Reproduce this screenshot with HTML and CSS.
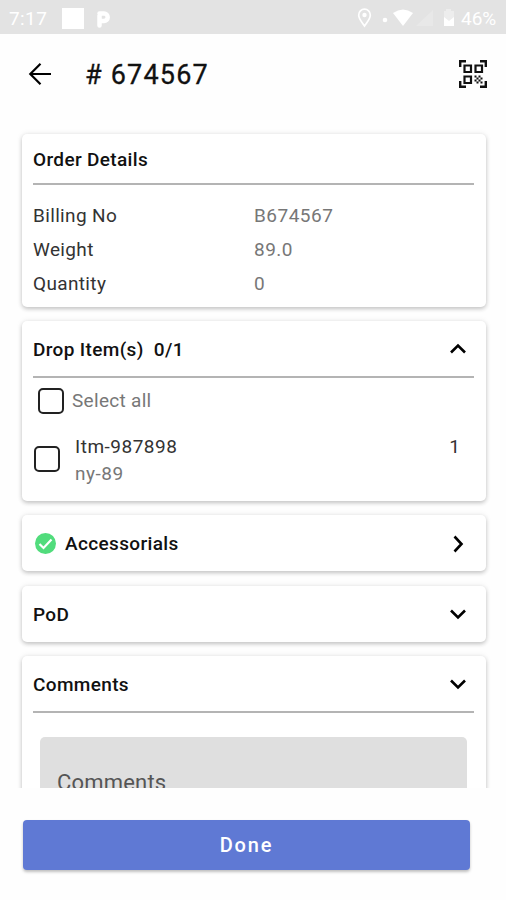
FILE: index.html
```html
<!DOCTYPE html>
<html lang="en">
<head>
<meta charset="utf-8">
<title># 674567</title>
<link rel="stylesheet" href="styles.css">
</head>
<body>
<div class="status">
  <span class="time">7:17</span>
  <span class="note"></span>
  <svg class="parking" width="16" height="19" viewBox="0 0 16 19"><path d="M3.500 16.500V6.500M3.500 4.500H8a3.700 3.700 0 0 1 0 7.400H6" fill="none" stroke="#fff" stroke-width="4.500" stroke-linecap="round" stroke-linejoin="round"/></svg>
  <svg class="indicators" width="100" height="24" viewBox="0 0 100 24">
    <path d="M8.500 20C6 16 2.700 13 2.700 9a5.800 5.800 0 0 1 11.600 0c0 4-3.300 7-5.800 11z" fill="none" stroke="#fff" stroke-width="1.700"/>
    <circle cx="8.500" cy="9" r="2.200" fill="#fff"/>
    <circle cx="29" cy="14" r="2.300" fill="#fff"/>
    <path d="M37 7q10-7 20 0L47 20z" fill="#fff"/>
    <path d="M60 20L77 4v16z" fill="#e8e8e8"/>
    <path d="M90 5V3h5v2h3v15H88V5z" fill="#ededed"/>
    <path d="M88 11l5 4 5-4v9H88z" fill="#fff"/>
  </svg>
  <span class="battery">46%</span>
</div>
<header class="bar">
  <svg class="back" width="24" height="24" viewBox="0 0 24 24" fill="none" stroke="#000" stroke-width="2.200"><path d="M23 12H2.500M12.500 1.800L2.300 12l10.200 10.200"/></svg>
  <h1 class="title"># 674567</h1>
  <svg class="scan" width="28" height="28" viewBox="0 0 28 28" fill="none" stroke="#111" stroke-width="2.200">
    <path d="M1.200 7V1.200H7M21 1.200h5.800V7M26.800 21v5.800H21M7 26.800H1.200V21" stroke-width="2.400"/>
    <path d="M5.500 5.500h6.500v6.500H5.500zM16.500 5.500H23v6.500h-6.500zM5.500 16.500h6.500V23H5.500z"/>
    <path d="M15.500 16.500h2m2 0h2M17.500 18.500h2m2 0h2M15.500 20.500h2m2 0h2M17.500 22.500h2m2 0h2" stroke-width="1.900"/>
  </svg>
</header>
<main class="content">
  <section class="card order">
    <h2 class="head">Order Details</h2>
    <dl class="facts">
      <dt>Billing No</dt><dd>B674567</dd>
      <dt>Weight</dt><dd>89.0</dd>
      <dt>Quantity</dt><dd>0</dd>
    </dl>
  </section>
  <section class="card drop">
    <h2 class="head"><span class="label">Drop Item(s)&nbsp; 0/1</span>
      <svg class="chev" width="24" height="24" viewBox="0 0 24 24"><path d="M5 15.500L12 8.500l7 7"/></svg></h2>
    <div class="select"><span class="box"></span><span class="all">Select all</span></div>
    <div class="item">
      <span class="box"></span>
      <div class="text"><div class="name">Itm-987898</div><div class="place">ny-89</div></div>
      <span class="qty">1</span>
    </div>
  </section>
  <section class="card closed">
    <h2 class="head">
      <svg class="check" width="21" height="21" viewBox="0 0 21 21"><circle cx="10.500" cy="10.500" r="10.500" fill="#51dc7c"/><path d="M4.500 11l4 4 8-8.500" fill="none" stroke="#fff" stroke-width="2.200"/></svg>
      <span class="label">Accessorials</span>
      <svg class="chev" width="24" height="24" viewBox="0 0 24 24"><path d="M8.500 4.500l7 7.500-7 7.500"/></svg></h2>
  </section>
  <section class="card closed">
    <h2 class="head"><span class="label">PoD</span>
      <svg class="chev" width="24" height="24" viewBox="0 0 24 24"><path d="M5 8.500l7 7 7-7"/></svg></h2>
  </section>
  <section class="card comments">
    <h2 class="head"><span class="label">Comments</span>
      <svg class="chev" width="24" height="24" viewBox="0 0 24 24"><path d="M5 8.500l7 7 7-7"/></svg></h2>
    <div class="field"><span class="hint">Comments</span></div>
  </section>
</main>
<footer class="foot"><button class="done">Done</button></footer>
</body>
</html>
```
FILE: styles.css
```css
* { box-sizing: border-box; margin: 0; padding: 0; }
body {
  width: 506px; height: 900px; overflow: hidden;
  display: flex; flex-direction: column;
  background: #fefefe; color: #111;
  font-family: Roboto, "Liberation Sans", sans-serif;
  font-size: 19px;
}
svg { display: block; flex: none; }
.status {
  height: 34px; flex: none; display: flex; align-items: center;
  padding: 2px 8px 0 9px; background: #e3e3e3; color: #fff;
}
.time { width: 53px; font-size: 19px; letter-spacing: 0.4px; }
.note { width: 22px; height: 21px; background: #fff; margin-right: 12px; }
.indicators { margin-left: auto; margin-right: 5px; }
.battery { font-size: 19px; width: 37px; white-space: nowrap; }
.bar {
  height: 88px; flex: none; display: flex; align-items: flex-start;
  padding: 25px 19px 0 28px;
}
.back { margin-top: 3px; }
.scan { margin-top: 1px; }
.title { margin: 0 auto 0 33px; font-size: 27px; line-height: 32px; font-weight: 400; letter-spacing: 1.2px; -webkit-text-stroke: 0.3px #111; }
.content { height: 666px; flex: none; overflow: hidden; padding: 12px 20px 0 22px; }
.card {
  border-radius: 5px; background: #fff; padding: 0 12px; margin-bottom: 14px;
  box-shadow: 0 2px 4px rgba(0,0,0,.2), 0 0 6px rgba(0,0,0,.08);
}
.order { height: 173px; }
.drop { height: 180px; }
.closed { height: 56px; margin-bottom: 14.500px; }
.comments { height: 220px; }
.head {
  height: 57px; display: flex; align-items: center; padding-top: 1px;
  border-bottom: 2px solid #b4b4b4; margin-left: -1px;
  font-size: 19px; font-weight: 500; letter-spacing: 0.35px;
}
.order .head { height: 51px; }
.closed .head { height: 56px; border: 0; }
.chev { margin: 0 4.500px 0 auto; fill: none; stroke: #000; stroke-width: 2.600; }
.check { margin: 0 9px 0 2px; }
.facts {
  display: grid; grid-template-columns: 221px 1fr; grid-auto-rows: 34px;
  padding-top: 14px; margin-left: -1px; line-height: 34px; letter-spacing: 0.35px;
}
.facts dt { color: #333; }
.facts dd { color: #777; letter-spacing: 0.5px; }
.box { width: 26px; height: 26px; flex: none; border: 2px solid #222; border-radius: 5px; }
.select { height: 45px; display: flex; align-items: center; padding-left: 4px; gap: 8px; }
.all { color: #777; letter-spacing: 0.3px; }
.item { display: flex; align-items: flex-start; height: 70px; padding-top: 10px; }
.item .box { margin-top: 13px; }
.text { margin-left: 15px; line-height: 27px; letter-spacing: 0.5px; }
.name { color: #333; }
.place { color: #777; }
.qty { margin: 0 14px 0 auto; line-height: 27px; color: #333; }
.field {
  height: 120px; margin: 24px 7px 0 6px; padding: 32px 17px 0; border-radius: 5px 5px 0 0;
  background: #dfdfdf; color: #555; font-size: 22px; line-height: 28px; letter-spacing: 0.2px;
}
.foot { flex: 1; padding: 32px 36px 0 23px; background: #fefefe; }
.done {
  display: block; width: 100%; height: 50px; border: 0; border-radius: 4px;
  background: #5f79d4; color: #fff; font: 500 20px Roboto, sans-serif; letter-spacing: 1.800px;
  box-shadow: 0 2px 3px rgba(0,0,0,.25);
}
```
